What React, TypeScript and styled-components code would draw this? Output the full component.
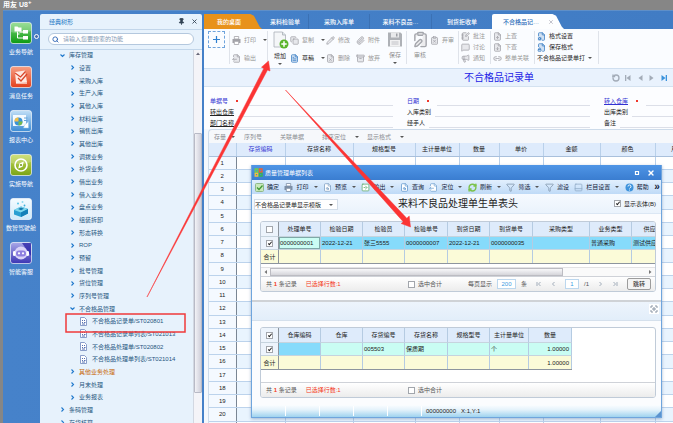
import React from "react";
import styled, { createGlobalStyle, css } from "styled-components";
import {
  FileOutput, Copy, FileText, Pencil, FileX, Paperclip, Archive,
  ClipboardPen, ClipboardX, NotebookPen, MessageSquare, Megaphone, FileUp, FileDown, Link2,
  FileCog, FileLock, Search, Pin, X, FileSearch, Funnel, PanelBottom, RotateCcw,
  SquareArrowRight, RefreshCw,
} from "lucide-react";

const Global = createGlobalStyle`
  *, *::before, *::after { box-sizing: border-box; }
  html, body { margin: 0; height: 100%; overflow: hidden; }
  #root { height: 100%; }
  body, button, input, select {
    font-family: "Liberation Sans", "Noto Sans CJK SC", sans-serif;
    font-size: 6px;
    line-height: 8px;
    color: #222;
  }
  button, input, select { margin: 0; padding: 0; border: 0; background: none; }
  button { white-space: nowrap; cursor: pointer; }
`;

/* ---------- frame ---------- */

const Page = styled.div`
  display: flex;
  flex-direction: column;
  height: 100vh;
  background: #868686;
`;
const Brand = styled.header`
  flex: none;
  height: 10px;
  padding-left: 3px;
  color: #fff;
  font-size: 7px;
  font-weight: 700;
  line-height: 9px;
  sup { font-size: 6px; line-height: 0; }
`;
const Shell = styled.div`
  flex: 1;
  min-height: 0;
  display: flex;
  margin-left: 3px;
  background: linear-gradient(90deg, #4682ca, #417cc4);
  border-top: 1px solid #5f8fc8;
`;

/* ---------- left rail ---------- */

const Rail = styled.nav`
  flex: none;
  width: 37px;
  padding-top: 11px;
  position: relative;
`;
const RailButton = styled.button`
  display: flex;
  flex-direction: column;
  align-items: center;
  gap: 4px;
  width: 36px;
  height: 44px;
  color: #fff;
  svg { width: 22px; height: 22px; display: block; }
`;
const RailToggle = styled.button`
  position: absolute;
  right: 1px;
  top: 23px;
  width: 5px;
  height: 5px;
  border: 1px solid #fff;
  border-radius: 50%;
  background: #4a6fb0;
`;

/* ---------- tree ---------- */

const Side = styled.aside`
  flex: none;
  width: 162px;
  margin-top: 3px;
  display: flex;
  flex-direction: column;
  background: #e7f2fc;
  border-radius: 2px 2px 0 0;
  overflow: hidden;
`;
const SideHead = styled.div`
  flex: none;
  display: flex;
  align-items: center;
  height: 16px;
  padding: 0 4px 0 9px;
  gap: 6px;
  color: #2377c4;
  border-bottom: 1px solid #c2d6ea;
  span { flex: 1; }
  button { height: 7px; color: #345; }
  svg { display: block; }
`;
const SearchBox = styled.label`
  flex: none;
  display: flex;
  align-items: center;
  gap: 4px;
  height: 12px;
  margin: 3px 8px 4px;
  padding: 0 3px;
  border: 1px solid #b4c8de;
  border-radius: 6px;
  background: #fff;
  color: #2a62b4;
  input { flex: 1; min-width: 0; outline: 0; }
  input::placeholder { color: #7f98b4; opacity: 1; }
`;
const TreeBody = styled.div`
  flex: 1;
  min-height: 0;
  display: flex;
  border-top: 1px solid #c2d6ea;
`;
const Tree = styled.ul`
  flex: 1;
  margin: -1px 0 0;
  padding: 0;
  list-style: none;
  overflow: hidden;
`;
const TreeRow = styled.li<{ $level: number; $hot?: boolean }>`
  display: flex;
  align-items: center;
  height: 13px;
  &:nth-child(3n + 1) { height: 12px; }
  padding-left: ${(p) => 10 + p.$level * 10}px;
  button {
    display: flex;
    align-items: center;
    gap: ${(p) => (p.$level === 3 ? 5 : 4)}px;
    color: ${(p) => (p.$hot ? "#c8690c" : "#1f567f")};
  }
`;
const Track = styled.div`
  flex: none;
  width: 9px;
  padding: 2px 1px 0;
  display: flex;
  flex-direction: column;
  align-items: center;
  background: #f4f4f8;
  border-left: 1px solid #d2d8e2;
`;
const Thumb = styled.div`
  width: 8px;
  height: 260px;
  margin-top: 78px;
  border: 1px solid #b8bac6;
  border-radius: 1px;
  background: linear-gradient(90deg, #f2f2f6, #cfcfda);
`;

/* ---------- main area ---------- */

const Main = styled.main`
  flex: 1;
  min-width: 0;
  margin-left: 2px;
  padding-top: 3px;
  display: flex;
  flex-direction: column;
`;
const Tabs = styled.div`
  flex: none;
  display: flex;
  height: 15px;
`;
const Tab = styled.button<{ $w: number; $kind?: "home" | "on"; $line?: boolean }>`
  width: ${(p) => p.$w}px;
  height: 15px;
  color: #fff;
  font-weight: 500;
  border-right: ${(p) => (p.$line ? "1px solid #3b71b4" : "0")};
  ${(p) =>
    p.$kind === "home" &&
    css`
      padding-right: 8px;
      background: #e8921b;
      clip-path: polygon(0 0, 80% 0, 86% 12%, 96% 85%, 100% 100%, 0 100%);
    `}
  ${(p) =>
    p.$kind === "on" &&
    css`
      display: flex;
      align-items: center;
      justify-content: space-between;
      padding: 0 10px 0 11px;
      background: #fdfeff;
      color: #2a6cb8;
      border-radius: 2px 0 0 0;
      clip-path: polygon(0 0, 84% 0, 89% 12%, 97% 85%, 100% 100%, 0 100%);
    `}
`;
const Ribbon = styled.div`
  flex: none;
  display: flex;
  height: 39px;
  padding: 2px 0 4px 4px;
  background: #fafcff;
`;
const PlusButton = styled.button`
  display: flex;
  align-items: center;
  justify-content: center;
  width: 17px;
  height: 17px;
  border: 1px dashed #6fa4dc;
`;
const Rule = styled.i<{ $l?: number; $r?: number }>`
  flex: none;
  width: 1px;
  margin: 0 ${(p) => p.$r ?? 2}px 0 ${(p) => p.$l ?? 4}px;
  background: #dfe3ea;
`;
const Stack = styled.div<{ $w: number; $three?: boolean }>`
  flex: none;
  width: ${(p) => p.$w}px;
  display: flex;
  flex-direction: column;
  align-items: flex-start;
  gap: ${(p) => (p.$three ? 3 : 10)}px;
  padding-top: ${(p) => (p.$three ? 1 : 5)}px;
`;
const ToolButton = styled.button<{ $on?: boolean }>`
  display: flex;
  align-items: center;
  gap: 3px;
  height: 8px;
  color: ${(p) => (p.$on ? "#222" : "#989898")};
  svg {
    color: ${(p) => (p.$on ? "#3b7fc4" : "#a2a2a8")};
    fill: currentColor;
    fill-opacity: 0.22;
  }
`;
const BigButton = styled.button<{ $on?: boolean; $w: number }>`
  flex: none;
  width: ${(p) => p.$w}px;
  display: flex;
  flex-direction: column;
  align-items: center;
  gap: 3px;
  color: ${(p) => (p.$on ? "#222" : "#8f8f8f")};
  svg { color: #a4a6ac; flex: none; }
`;
const Caret = styled.i<{ $gap?: number }>`
  width: 0;
  height: 0;
  margin-left: ${(p) => p.$gap ?? 0}px;
  border: 2px solid transparent;
  border-top-color: #555;
  border-bottom: 0;
`;

const TitleBar = styled.div`
  flex: none;
  display: flex;
  align-items: center;
  justify-content: flex-end;
  height: 19px;
  background: #e9f2fd;
  border-top: 1px solid #cfdff0;
  border-bottom: 1px solid #d4e2f0;
`;
const DocTitle = styled.h1`
  margin: 0 78px 0 0;
  font-size: 10px;
  line-height: 14px;
  font-weight: 400;
  color: #1c1ce6;
`;
const Pager = styled.div`
  display: flex;
  gap: 4px;
  padding-right: 5px;
  button { height: 8px; color: #a3acb8; }
  button:last-child { color: #3b93dc; }
  svg { display: block; }
`;

const Form = styled.form`
  flex: none;
  display: grid;
  grid-template-columns: 197px 197px 1fr;
  padding: 8px 0 1px 6px;
  background: #fcfdff;
`;
const Field = styled.label<{ $color?: string; $under?: boolean }>`
  display: flex;
  align-items: center;
  height: 11px;
  margin-right: 14px;
  white-space: nowrap;
  span {
    color: ${(p) => p.$color ?? "#222"};
    text-decoration: ${(p) => (p.$under ? "underline" : "none")};
  }
  b { width: 2px; height: 2px; margin: 0 4px 0 8px; background: #f0372b; }
  input {
    flex: 1;
    min-width: 0;
    height: 10px;
    margin-left: 4px;
    border-bottom: 1px solid #dcdfe8;
    outline: 0;
  }
`;
const FormLast = styled.div`
  overflow: hidden;
  label { margin-right: 0; }
`;

const GridArea = styled.section`
  flex: 1;
  min-height: 0;
  position: relative;
  padding-left: 4px;
  background: #f4f8fd;
`;
const GridTools = styled.div`
  display: flex;
  height: 14px;
  align-items: center;
  padding-left: 5px;
  border-top: 1px solid #cddbea;
  border-left: 1px solid #cddbea;
  border-radius: 4px 0 0 0;
  background: #f6f8fb;
`;
const GridTool = styled.button<{ $w: number; $gap?: number }>`
  display: flex;
  align-items: center;
  width: ${(p) => p.$w}px;
  color: #8a8d92;
`;
const GridClip = styled.div`
  overflow: hidden;
  height: 100%;
  border-left: 1px solid #cddbea;
`;
const Ledger = styled.table`
  width: 502px;
  table-layout: fixed;
  border-collapse: collapse;
  text-align: center;
  th, td { padding: 0; height: 13px; border-right: 1px solid #b9d0ea; border-bottom: 1px solid #bcd3ec; }
  tr:nth-child(4n) td, tr:nth-child(4n) th { height: 14px; }
  thead th { background: #deebfc; font-weight: 400; border-bottom-color: #a9c0dc; }
  thead th:nth-child(2) { color: #3232d2; }
  tbody th { background: #f4f9ff; font-weight: 400; border-right-color: #7a8694; }
  tbody td { background: #fff; }
  tbody tr:nth-child(even) td { background: #e9f4fe; }
`;

/* ---------- dialog ---------- */

const Dialog = styled.section`
  position: absolute;
  left: 47px;
  right: 11px;
  top: 36px;
  display: flex;
  flex-direction: column;
  background: #fbfcfe;
  border: 1px solid #6fa5dd;
  border-top: 0;
  box-shadow: 0 1px 3px rgba(50, 90, 140, 0.4);
`;
const DialogHead = styled.header`
  display: flex;
  align-items: center;
  gap: 2px;
  height: 15px;
  padding: 0 6px 0 2px;
  background: linear-gradient(#4f95e6, #3a7dd0);
  color: #fff;
  h2 { flex: 1; margin: 0; font-size: 6px; line-height: 8px; font-weight: 400; }
  button { display: block; height: 8px; margin-left: 4px; color: #fff; }
  svg { display: block; }
`;
const DialogTools = styled.div`
  display: flex;
  align-items: center;
  justify-content: space-between;
  height: 14px;
  padding: 0 1px 0 3px;
  background: linear-gradient(#e2effd, #bfdaf7);
  button { display: flex; align-items: center; gap: 3px; height: 10px; color: #16243a; }
  button:last-child { font-weight: 700; font-size: 10px; }
`;
const DialogTitleRow = styled.div`
  display: grid;
  grid-template-columns: 84px 1fr 46px;
  align-items: center;
  height: 20px;
  padding: 0 1px 0 2px;
  background: linear-gradient(#f6faff, #eaf3fc);
  border-bottom: 1px solid #dbe7f4;
  h3 { margin: 0 36px 0 0; font-size: 10px; line-height: 14px; font-weight: 400; text-align: center; }
`;
const Picker = styled.div`
  position: relative;
  height: 11px;
  margin-top: 2px;
  background: #fff;
  border: 1px solid #d3dde8;
  select { display: block; width: 100%; height: 9px; appearance: none; outline: 0; }
  i { position: absolute; right: 4px; top: 4px; pointer-events: none; }
`;
const CheckLabel = styled.label`
  display: flex;
  align-items: center;
  gap: 3px;
  white-space: nowrap;
`;
const Tick = styled.input.attrs({ type: "checkbox" })`
  appearance: none;
  position: relative;
  flex: none;
  width: 7px;
  height: 7px;
  border: 1px solid #a2a6ac;
  background: #fff;
  vertical-align: middle;
  &:checked::after {
    content: "";
    position: absolute;
    left: 2px;
    top: 0;
    width: 2px;
    height: 4px;
    border: solid #222;
    border-width: 0 1px 1px 0;
    transform: rotate(40deg);
  }
`;
const Panel = styled.div<{ $mt: number; $mb: number }>`
  margin: ${(p) => p.$mt}px 5px ${(p) => p.$mb}px 8px;
  border: 1px solid #c0cbd8;
  border-radius: 3px;
  background: #fff;
  overflow: hidden;
`;
const TableClip = styled.div<{ $gap: number }>`
  overflow: hidden;
  padding-bottom: ${(p) => p.$gap}px;
`;
const Sheet = styled.table<{ $w: number }>`
  width: ${(p) => p.$w}px;
  table-layout: fixed;
  border-collapse: separate;
  border-spacing: 0;
  border-bottom: 1px solid #8d959e;
  th, td {
    padding: 0 2px 0 1px;
    border-right: 1px solid #b5cbe2;
    border-bottom: 1px solid #c6d4de;
    white-space: nowrap;
    overflow: hidden;
    font-weight: 400;
    text-align: left;
  }
  th { height: 15px; padding: 0; text-align: center; background: #deebfb; }
  td { height: 13px; }
  tr > :first-child { padding: 0; text-align: center; border-right-color: #8d959e; background: #edf4fc; }
  tfoot td, tfoot tr > :first-child { background: #fbfbd8; border-bottom: 0; }
`;
const Cell = styled.td<{ $bg: string; $end?: boolean; $box?: boolean }>`
  && {
    background: ${(p) => p.$bg};
    text-align: ${(p) => (p.$end ? "right" : "left")};
    ${(p) => p.$box && "box-shadow: inset 0 0 0 1px #7fa9a8;"}
  }
`;
const EndCell = styled.td`
  && { text-align: right; }
`;
const HScroll = styled.div`
  display: flex;
  align-items: center;
  justify-content: space-between;
  height: 9px;
  padding: 0 3px;
  border-top: 1px solid #e2e2e4;
  background: #fafafa;
  color: #777;
`;
const HThumb = styled.div`
  width: 293px;
  height: 8px;
  margin: 0 auto 0 3px;
  border: 1px solid #bcbcc2;
  background: linear-gradient(#f8f8fa, #d5d5da);
`;
const Foot = styled.div`
  display: flex;
  align-items: center;
  height: 15px;
  padding: 0 4px 0 5px;
  border-top: 1px solid #cfd2d8;
  background: linear-gradient(#fff, #ececec);
  color: #555;
`;
const Summary = styled.div`
  width: 142px;
  display: flex;
  gap: 9px;
  em { font-style: normal; color: #f43a22; }
  b { color: #f43a22; }
`;
const Paging = styled.div`
  flex: 1;
  display: flex;
  align-items: center;
  justify-content: space-between;
  padding-left: 26px;
  label { display: flex; align-items: center; gap: 5px; color: #555; }
  svg { display: block; color: #a2adba; }
  input {
    height: 10px;
    border: 1px solid #bcd7ee;
    background: #fff;
    color: #3b9be2;
    text-align: center;
  }
`;
const PageSize = styled.input`
  width: 19px;
`;
const PageNo = styled.input`
  width: 14px;
`;
const JumpButton = styled.button`
  width: 24px;
  height: 12px;
  border: 1px solid #9c9c9c;
  border-radius: 2px;
  background: #f4f4f4;
  line-height: 9px;
`;
const Band = styled.div`
  display: flex;
  justify-content: flex-end;
  align-items: flex-start;
  height: 21px;
  padding: 2px;
  border-top: 2px solid #cfd2d6;
  border-bottom: 1px solid #d5e0ec;
  background: linear-gradient(#edf4fc, #e2eefa);
  button { width: 10px; height: 10px; background: #fff; }
  svg { display: block; margin: auto; }
`;
const Status = styled.footer`
  display: flex;
  align-items: center;
  height: 12px;
  background: linear-gradient(#fbfdff, #e4f2fb 40%, #9fd3ef);
  > svg { align-self: flex-end; }
`;
const StatusSlot = styled.i`
  width: 34px;
  height: 10px;
  border-right: 1px solid #fff;
`;
const StatusText = styled.div`
  flex: 1;
  display: flex;
  gap: 5px;
  padding-left: 4px;
`;
const Marks = styled.svg`
  position: fixed;
  left: 0;
  top: 0;
  pointer-events: none;
`;

/* ---------- drawings ---------- */

function Tile({ id, from, to, children }: { id: string; from: string; to: string; children: React.ReactNode }) {
  return (
    <svg viewBox="0 0 22 22" aria-hidden="true">
      <defs>
        <linearGradient id={id} x1="0" y1="0" x2="0" y2="1">
          <stop offset="0" stopColor={from} />
          <stop offset="1" stopColor={to} />
        </linearGradient>
      </defs>
      <rect x="0.5" y="0.5" width="21" height="21" rx="2.5" fill={`url(#${id})`} stroke="#fff" strokeOpacity="0.65" />
      {children}
    </svg>
  );
}

const railItems = [
  {
    text: "业务导航",
    icon: (
      <Tile id="rg" from="#7fd67a" to="#0c9a12">
        <path d="M1 1h20v8Q11 13 1 10z" fill="#fff" opacity="0.22" />
        <path d="M4.500 4.500h3l1 1h3v4h-7zM13 8h5v3.500h-5zM13 14h5v3.500h-5z" fill="#fff" />
        <path d="M7.500 9.500v6.500h5.500M7.500 12h2M9.500 10h3.500" fill="none" stroke="#fff" strokeWidth="1" />
      </Tile>
    ),
  },
  {
    text: "消息任务",
    icon: (
      <Tile id="rr" from="#f7a084" to="#e2401c">
        <path d="M5 6l10-1.500 2 11.500-11 1z" fill="#fde9e2" />
        <path d="M5 7l5.500 4 5-5.500M8 12l3 3 6-7" fill="none" stroke="#d8452a" strokeWidth="1.300" />
        <path d="M6 17h11" stroke="#fff" strokeWidth="1.200" />
      </Tile>
    ),
  },
  {
    text: "报表中心",
    icon: (
      <Tile id="rb" from="#c3e0f7" to="#3b8bd4">
        <path d="M3 5h13v11H3z" fill="#f5fafe" />
        <circle cx="8.500" cy="11.500" r="4" fill="#3a93d8" />
        <path d="M8.500 11.500v-4a4 4 0 0 0-4 4z" fill="#f5c042" />
        <path d="M8.500 11.500h4a4 4 0 0 1-4 4z" fill="#76bb4a" />
        <path d="M14 8h3.500M14 10.500h3.500" stroke="#67a5da" />
        <path d="M13.500 18l1-3 4-3.500v6.500z" fill="#fff" stroke="#8fc0e6" strokeWidth="0.500" />
      </Tile>
    ),
  },
  {
    text: "实施导航",
    icon: (
      <Tile id="ry" from="#c5d95a" to="#7ba414">
        <path d="M1 1h20v7Q11 12 1 9z" fill="#fff" opacity="0.2" />
        <circle cx="11" cy="11" r="6" fill="none" stroke="#fff" strokeWidth="1.600" />
        <path d="M13.800 7.500l-1.300 5.200-4.300 1.900 1.200-5z" fill="#fff" />
        <circle cx="11" cy="11" r="1" fill="#6c9016" />
      </Tile>
    ),
  },
  {
    text: "数智驾驶舱",
    icon: (
      <Tile id="rc" from="#f4fbff" to="#cfeafa">
        <path d="M4 12l7-3.500 7 2.500v4.500L11 19l-7-2.500z" fill="#2a9fd2" />
        <path d="M4 12l7-3.500 7 2.500-7 3.500z" fill="#7fd8ee" />
        <path d="M8 11l3-1.500 3 1.200-3 1.500z" fill="#1678ae" />
        <path d="M11 14.500V19l7-3.500V11z" fill="#1480b8" />
        <circle cx="8" cy="5.500" r="1" fill="#57c4e8" />
        <circle cx="12.500" cy="4" r="1" fill="#8edaf0" />
        <circle cx="14.500" cy="7.500" r="0.900" fill="#3bb0dc" />
      </Tile>
    ),
  },
  {
    text: "智能客服",
    icon: (
      <Tile id="rp" from="#a9a8e8" to="#3c35b4">
        <path d="M12 1h9v13z" fill="#1d16a0" opacity="0.7" />
        <circle cx="11" cy="11" r="6.500" fill="#d9d3f8" />
        <rect x="6" y="8.500" width="10" height="6" rx="3" fill="#8e7fe0" />
        <circle cx="9" cy="11.300" r="1.100" fill="#fff" />
        <circle cx="13" cy="11.300" r="1.100" fill="#fff" />
        <rect x="3" y="9" width="2.500" height="5" rx="1.200" fill="#fff" />
        <rect x="16.500" y="9" width="2.500" height="5" rx="1.200" fill="#fff" />
      </Tile>
    ),
  },
];

const Chevron = ({ open }: { open?: boolean }) => (
  <svg width="5" height="5" viewBox="0 0 5 5" aria-hidden="true">
    <path d={open ? "M0.500 1.500l2 2 2-2" : "M1.500 0.500l2 2-2 2"} fill="none" stroke="#1f78cc" strokeWidth="1.100" />
  </svg>
);
const DocIcon = () => (
  <svg width="7" height="9" viewBox="0 0 7 9" aria-hidden="true">
    <path d="M0.500 0.500h4l2 2v6h-6z" fill="#fff" stroke="#6f86bd" strokeWidth="0.800" />
    <path d="M2 3.500h1M2 5.500h1M4 3.500h1M4 5.500h1.500M2 7h3" stroke="#4360a8" strokeWidth="0.900" />
  </svg>
);
const PrintIcon = ({ color }: { color: string }) => (
  <svg width="9" height="9" viewBox="0 0 9 9" aria-hidden="true">
    <path d="M2.300 0.500h4.400v2.500H2.300z" fill="#fff" fillOpacity="1" stroke={color} strokeWidth="0.800" />
    <path d="M0.500 3h8v4h-8z" fill={color} fillOpacity="1" />
    <path d="M2.300 5.300h4.400v3.200H2.300z" fill="#fff" fillOpacity="1" stroke={color} strokeWidth="0.800" />
  </svg>
);
const PlusMark = () => (
  <svg width="9" height="9" viewBox="0 0 9 9" aria-hidden="true">
    <path d="M4.500 1v7M1 4.500h7" stroke="#2f80d0" strokeWidth="1.200" />
  </svg>
);
const AddDoc = () => (
  <svg width="17" height="18" viewBox="0 0 17 18" aria-hidden="true">
    <path d="M2 1h8.500l3 3v12H2z" fill="#f4f6f8" stroke="#a9b0b8" strokeWidth="0.800" />
    <path d="M10.500 1v3h3" fill="#dfe4ea" stroke="#a9b0b8" strokeWidth="0.800" />
    <circle cx="12" cy="13" r="4.500" fill="#5cb52c" />
    <path d="M12 10.300v5.400M9.300 13h5.400" stroke="#fff" strokeWidth="1.500" />
  </svg>
);
const Disk = () => (
  <svg width="16" height="17" viewBox="0 0 16 17" aria-hidden="true">
    <path d="M1 1.500h12.500l1.500 1.500v12.500H1z" fill="#aeb1b6" />
    <path d="M4 1.500h8v5H4z" fill="#e8e9eb" />
    <path d="M9 2.500h1.500v3H9z" fill="#9b9ea4" />
    <path d="M3 9h10v6.500H3z" fill="#f1f1f2" />
    <path d="M4.500 11h7M4.500 13h7" stroke="#b6b8bc" strokeWidth="0.800" />
  </svg>
);
const AppMark = () => (
  <svg width="9" height="9" viewBox="0 0 9 9" aria-hidden="true">
    <path d="M1.200 1h2.600v3H1.200z" fill="none" stroke="#6fd04a" strokeWidth="1.300" />
    <path d="M5.400 1H8v3H5.400z" fill="none" stroke="#f0602e" strokeWidth="1.300" />
    <path d="M1.200 5.300h2.600V8H1.200z" fill="none" stroke="#f2c33a" strokeWidth="1.300" />
    <path d="M5.400 5.300H8V8H5.400z" fill="none" stroke="#35b64e" strokeWidth="1.300" />
  </svg>
);
const Nav = ({ kind }: { kind: "first" | "prev" | "next" | "last" }) => {
  const flip = kind === "next" || kind === "last";
  return (
    <svg width="8" height="8" viewBox="0 0 8 8" aria-hidden="true">
      <g transform={flip ? "matrix(-1 0 0 1 8 0)" : undefined} fill="currentColor">
        <path d="M6.500 1v6L2.500 4z" />
        {(kind === "first" || kind === "last") && <path d="M1 1h1.300v6H1z" />}
      </g>
    </svg>
  );
};
const Step = ({ kind }: { kind: "first" | "prev" | "next" | "last" }) => {
  const flip = kind === "next" || kind === "last";
  return (
    <svg width="6" height="6" viewBox="0 0 6 6" aria-hidden="true">
      <g transform={flip ? "matrix(-1 0 0 1 6 0)" : undefined} fill="none" stroke="currentColor">
        <path d="M4.500 1l-2 2 2 2" />
        {(kind === "first" || kind === "last") && <path d="M1 1v4" />}
      </g>
    </svg>
  );
};
const TickTile = () => (
  <svg width="9" height="9" viewBox="0 0 9 9" aria-hidden="true">
    <rect x="0.500" y="0.500" width="8" height="8" rx="1" fill="#c9e8bb" stroke="#8fb98a" />
    <path d="M2 4.500l2 2 3.500-4" fill="none" stroke="#3f9a35" strokeWidth="1.300" />
  </svg>
);
const HelpBall = () => (
  <svg width="9" height="9" viewBox="0 0 9 9" aria-hidden="true">
    <circle cx="4.500" cy="4.500" r="4" fill="#3f93dc" />
    <path d="M3 3.500a1.500 1.500 0 1 1 2 1.400l-.5.600" fill="none" stroke="#fff" strokeWidth="0.900" />
    <circle cx="4.500" cy="6.900" r="0.500" fill="#fff" />
  </svg>
);

/* ---------- data ---------- */

type Node = { t: string; level: number; open?: boolean; hot?: boolean };
const nodes: Node[] = [
  { t: "库存管理", level: 1, open: true },
  ..."设置 采购入库 生产入库 其他入库 材料出库 销售出库 其他出库 调拨业务 补货业务 借出业务 借入业务 盘点业务 组装拆卸 形态转换 ROP 预留 批号管理 货位管理 序列号管理"
    .split(" ")
    .map((t) => ({ t, level: 2 })),
  { t: "不合格品管理", level: 2, open: true },
  { t: "不合格品记录单/ST020801", level: 3 },
  { t: "不合格品记录单列表/ST021013", level: 3 },
  { t: "不合格品处理单/ST020802", level: 3 },
  { t: "不合格品处理单列表/ST021014", level: 3 },
  { t: "其他业务处理", level: 2, hot: true },
  { t: "月末处理", level: 2 },
  { t: "业务报表", level: 2 },
  { t: "条码管理", level: 1 },
  { t: "存货核算", level: 1 },
];

const ledgerCols: [string, number][] = [
  ["", 27], ["存货编码", 49], ["存货名称", 68], ["规格型号", 62], ["主计量单位", 44],
  ["数量", 40], ["单价", 44], ["金额", 57], ["颜色", 55], ["月份批次", 56],
];
const headCols: [string, number][] = [
  ["", 18], ["处理单号", 42], ["检验日期", 42], ["检验员", 42], ["检验单号", 43], ["到货日期", 42],
  ["到货单号", 43], ["采购类型", 57], ["业务类型", 42], ["供应商", 42],
];
const headRow = ["0000000001", "2022-12-21", "张三5555", "0000000007", "2022-12-21", "0000000035", "", "普通采购", "测试供应商"];
const bodyCols: [string, number][] = [
  ["", 18], ["仓库编码", 42], ["仓库", 42], ["存货编号", 42], ["存货名称", 43], ["规格型号", 42],
  ["主计量单位", 39], ["数量", 43],
];
const bodyRow = ["", "", "005503", "保质期", "", "个", "1.00000"];

const Cols = ({ list }: { list: [string, number][] }) => (
  <colgroup>
    {list.map(([t, w], i) => (
      <col key={t + i} width={w} />
    ))}
  </colgroup>
);

const ic = { size: 9, strokeWidth: 2, "aria-hidden": true } as const;

const dialogTools: { t: string; icon: React.ReactNode; caret?: boolean }[] = [
  { t: "确定", icon: <TickTile /> },
  { t: "打印", icon: <PrintIcon color="#7d8fa6" />, caret: true },
  { t: "预览", icon: <FileSearch {...ic} color="#7a9cc0" fill="#fff" />, caret: true },
  { t: "输出", icon: <SquareArrowRight {...ic} color="#5aa868" fill="#fff" />, caret: true },
  { t: "查询", icon: <FileSearch {...ic} color="#5b94cc" fill="#fff" /> },
  { t: "定位", icon: <FileOutput {...ic} color="#6fa0d0" fill="#fff" />, caret: true },
  { t: "刷新", icon: <RefreshCw {...ic} strokeWidth={4} color="#7cc24c" />, caret: true },
  { t: "筛选", icon: <Funnel {...ic} color="#7f93aa" />, caret: true },
  { t: "滤设", icon: <Funnel {...ic} color="#7f93aa" /> },
  { t: "栏目设置", icon: <PanelBottom {...ic} color="#8fa9c6" />, caret: true },
  { t: "帮助", icon: <HelpBall /> },
];

function FootInfo() {
  return (
    <>
      <Summary>
        <span>共 <b>1</b> 条记录</span>
        <em>已选择行数:1</em>
      </Summary>
      <CheckLabel>
        <Tick />
        选中合计
      </CheckLabel>
    </>
  );
}

export default function App() {
  return (
    <Page>
      <Global />
      <Brand>用友 U8<sup>+</sup></Brand>
      <Shell>
        <Rail>
          {railItems.map((r) => (
            <RailButton key={r.text}>
              {r.icon}
              {r.text}
            </RailButton>
          ))}
          <RailToggle aria-label="展开" />
        </Rail>

        <Side>
          <SideHead>
            <span>经典树形</span>
            <button aria-label="固定"><Pin size={7} strokeWidth={3} fill="currentColor" /></button>
            <button aria-label="关闭"><X size={7} strokeWidth={3} /></button>
          </SideHead>
          <SearchBox>
            <Search size={7} strokeWidth={3} />
            <input aria-label="搜索" placeholder="请输入您要搜索的功能" />
          </SearchBox>
          <TreeBody>
            <Tree>
              {nodes.map((n, i) => (
                <TreeRow key={i} $level={n.level} $hot={n.hot}>
                  <button>
                    {n.level === 3 ? <DocIcon /> : <Chevron open={n.open} />}
                    {n.t}
                  </button>
                </TreeRow>
              ))}
            </Tree>
            <Track>
              <svg width="4" height="3" viewBox="0 0 4 3"><path d="M0 3l2-2.500L4 3z" fill="#667" /></svg>
              <Thumb />
            </Track>
          </TreeBody>
        </Side>

        <Main>
          <Tabs>
            <Tab $w={58} $kind="home">我的桌面</Tab>
            <Tab $w={47} $line>来料检验单</Tab>
            <Tab $w={61} $line>采购入库单</Tab>
            <Tab $w={62} $line>来料不良品…</Tab>
            <Tab $w={60}>到货拒收单</Tab>
            <Tab $w={72} $kind="on">不合格品记…<X size={6} color="#889" strokeWidth={2} /></Tab>
          </Tabs>
          <Ribbon>
            <PlusButton aria-label="新增页签"><PlusMark /></PlusButton>
            <Rule />
            <Stack $w={34}>
              <ToolButton><PrintIcon color="#a2a2a8" />打印<Caret $gap={4} /></ToolButton>
              <ToolButton><FileOutput {...ic} />输出</ToolButton>
            </Stack>
            <Rule $l={1} />
            <BigButton $on $w={20}><AddDoc />增加<Caret /></BigButton>
            <Stack $w={36}>
              <ToolButton><Copy {...ic} />复制<Caret $gap={4} /></ToolButton>
              <ToolButton $on><FileText {...ic} />草稿<Caret $gap={4} /></ToolButton>
            </Stack>
            <Stack $w={30}>
              <ToolButton><Pencil {...ic} />修改</ToolButton>
              <ToolButton><FileX {...ic} />删除</ToolButton>
            </Stack>
            <Stack $w={30}>
              <ToolButton><Paperclip {...ic} />附件</ToolButton>
              <ToolButton><Archive {...ic} />放弃</ToolButton>
            </Stack>
            <BigButton $w={18}><Disk />保存<Caret /></BigButton>
            <Rule $l={2} $r={3} />
            <BigButton $w={20}><ClipboardPen size={17} strokeWidth={2} fill="#ececee" />审核</BigButton>
            <Stack $w={26}>
              <ToolButton><ClipboardX {...ic} />弃审</ToolButton>
            </Stack>
            <Rule $l={2} />
            <Stack $w={27} $three>
              <ToolButton><NotebookPen {...ic} />批注</ToolButton>
              <ToolButton><MessageSquare {...ic} />讨论</ToolButton>
              <ToolButton><Megaphone {...ic} />通知</ToolButton>
            </Stack>
            <Rule $l={2} />
            <Stack $w={39} $three>
              <ToolButton><FileUp {...ic} />上查</ToolButton>
              <ToolButton><FileDown {...ic} />下查</ToolButton>
              <ToolButton><Link2 {...ic} />整单关联</ToolButton>
            </Stack>
            <Rule $l={2} />
            <Stack $w={60} $three>
              <ToolButton $on><FileCog {...ic} />格式设置</ToolButton>
              <ToolButton $on><FileLock {...ic} />保存格式</ToolButton>
              <ToolButton $on>不合格品记录单打<Caret /></ToolButton>
            </Stack>
            <Rule $l={1} />
          </Ribbon>
          <TitleBar>
            <DocTitle>不合格品记录单</DocTitle>
            <Pager>
              <button aria-label="刷新"><RotateCcw size={8} strokeWidth={4} /></button>
              <button aria-label="首张"><Nav kind="first" /></button>
              <button aria-label="上张"><Nav kind="prev" /></button>
              <button aria-label="下张"><Nav kind="next" /></button>
              <button aria-label="末张"><Nav kind="last" /></button>
            </Pager>
          </TitleBar>
          <Form>
            <div>
              <Field $color="#3232d2"><span>单据号</span><b /><input /></Field>
              <Field $under><span>转出仓库</span><input /></Field>
              <Field $under><span>部门名称</span><input /></Field>
            </div>
            <div>
              <Field $color="#3232d2"><span>日期</span><b /><input /></Field>
              <Field><span>入库类别</span><input /></Field>
              <Field><span>经手人</span><input /></Field>
            </div>
            <FormLast>
              <Field $color="#3232d2" $under><span>转入仓库</span><b /><input /></Field>
              <Field><span>出库类别</span><input /></Field>
              <Field><span>备注</span><input /></Field>
            </FormLast>
          </Form>

          <GridArea>
            <GridTools>
              <GridTool $w={30}>存量<Caret $gap={5} /></GridTool>
              <GridTool $w={36}>序列号</GridTool>
              <GridTool $w={42}>关联单据</GridTool>
              <GridTool $w={45}>排序定位<Caret $gap={9} /></GridTool>
              <GridTool $w={45}>显示格式<Caret $gap={9} /></GridTool>
            </GridTools>
            <GridClip>
              <Ledger>
                <Cols list={ledgerCols} />
                <thead>
                  <tr>{ledgerCols.map(([t]) => <th key={t}>{t}</th>)}</tr>
                </thead>
                <tbody>
                  {Array.from({ length: 21 }, (_, r) => (
                    <tr key={r}>
                      <th>{r < 20 ? r + 1 : ""}</th>
                      {ledgerCols.slice(1).map(([t]) => <td key={t} />)}
                    </tr>
                  ))}
                </tbody>
              </Ledger>
            </GridClip>

            <Dialog role="dialog" aria-label="质量管理单据列表">
              <DialogHead>
                <AppMark />
                <h2>质量管理单据列表</h2>
                <button aria-label="最大化">
                  <svg width="8" height="8" viewBox="0 0 8 8"><path d="M2.500 2.500h3v3h-3z" fill="none" stroke="#fff" strokeWidth="1.200" /></svg>
                </button>
                <button aria-label="关闭"><X size={8} strokeWidth={4} /></button>
              </DialogHead>
              <DialogTools>
                {dialogTools.map((b) => (
                  <button key={b.t}>
                    {b.icon}
                    {b.t}
                    {b.caret && <Caret $gap={2} />}
                  </button>
                ))}
                <button aria-label="更多">»</button>
              </DialogTools>
              <DialogTitleRow>
                <Picker>
                  <select aria-label="显示模版" defaultValue="0">
                    <option value="0">不合格品记录单显示模版</option>
                  </select>
                  <Caret />
                </Picker>
                <h3>来料不良品处理单生单表头</h3>
                <CheckLabel><Tick defaultChecked />显示表体(B)</CheckLabel>
              </DialogTitleRow>

              <Panel $mt={7} $mb={8}>
                <TableClip $gap={3}>
                  <Sheet $w={413}>
                    <Cols list={headCols} />
                    <thead>
                      <tr>
                        <th><Tick aria-label="全选" /></th>
                        {headCols.slice(1).map(([t]) => <th key={t}>{t}</th>)}
                      </tr>
                    </thead>
                    <tbody>
                      <tr>
                        <td><Tick aria-label="选择" defaultChecked /></td>
                        {headRow.map((t, i) => (
                          <Cell key={i} $bg={i === 0 ? "#cbfdf3" : "#86dbfb"} $box={i === 0}>{t}</Cell>
                        ))}
                      </tr>
                    </tbody>
                    <tfoot>
                      <tr><td>合计</td>{headRow.map((_, i) => <td key={i} />)}</tr>
                    </tfoot>
                  </Sheet>
                </TableClip>
                <HScroll>
                  <svg width="3" height="4" viewBox="0 0 3 4"><path d="M3 0v4L0.500 2z" fill="#777" /></svg>
                  <HThumb />
                  <svg width="3" height="4" viewBox="0 0 3 4"><path d="M0 0v4l2.500-2z" fill="#777" /></svg>
                </HScroll>
                <Foot>
                  <FootInfo />
                  <Paging>
                    <label>每页显示<PageSize defaultValue="200" />条</label>
                    <button aria-label="首页"><Step kind="first" /></button>
                    <button aria-label="上一页"><Step kind="prev" /></button>
                    <label><PageNo aria-label="页码" defaultValue="1" />/1</label>
                    <button aria-label="下一页"><Step kind="next" /></button>
                    <button aria-label="末页"><Step kind="last" /></button>
                    <JumpButton>跳转</JumpButton>
                  </Paging>
                </Foot>
              </Panel>

              <Band>
                <button aria-label="展开表体">
                  <svg width="8" height="8" viewBox="0 0 8 8">
                    <path d="M1 3V1h2M5 1h2v2M7 5v2H5M3 7H1V5M3 3h2v2H3z" fill="none" stroke="#8b97a6" />
                  </svg>
                </button>
              </Band>

              <Panel $mt={6} $mb={7}>
                <TableClip $gap={12}>
                  <Sheet $w={311}>
                    <Cols list={bodyCols} />
                    <thead>
                      <tr>
                        <th><Tick aria-label="全选" defaultChecked /></th>
                        {bodyCols.slice(1).map(([t]) => <th key={t}>{t}</th>)}
                      </tr>
                    </thead>
                    <tbody>
                      <tr>
                        <td><Tick aria-label="选择" defaultChecked /></td>
                        {bodyRow.map((t, i) => (
                          <Cell key={i} $bg={i === 0 ? "#86dbfb" : "#c9fdf3"} $end={i === 6}>{t}</Cell>
                        ))}
                      </tr>
                    </tbody>
                    <tfoot>
                      <tr>
                        <td>合计</td>
                        {bodyRow.slice(1).map((_, i) => <td key={i} />)}
                        <EndCell>1.00000</EndCell>
                      </tr>
                    </tfoot>
                  </Sheet>
                </TableClip>
                <Foot><FootInfo /></Foot>
              </Panel>

              <Status>
                {[1, 2, 3, 4, 5].map((n) => <StatusSlot key={n} />)}
                <StatusText><span>000000000</span><span>X:1,Y:1</span></StatusText>
                <svg width="6" height="6" viewBox="0 0 6 6"><path d="M6 0v6H0z" fill="#5b93cf" /></svg>
              </Status>
            </Dialog>
          </GridArea>
        </Main>
      </Shell>

      <Marks width="673" height="423" viewBox="0 0 673 423" aria-hidden="true">
        <rect x="66" y="314" width="119" height="18" fill="none" stroke="#f03a3a" strokeWidth="1.500" />
        <path d="M147 297L263.800 68.400 261.500 67.200 268.500 61 270 71 267.500 70z" fill="#fb3434" stroke="#fb3434" strokeWidth="0.500" />
        <path d="M285.500 90L406.800 218.300 409.200 216 410.500 227 401.200 223.500 403.200 221.700z" fill="#fb3434" stroke="#fb3434" strokeWidth="0.500" />
      </Marks>
    </Page>
  );
}
